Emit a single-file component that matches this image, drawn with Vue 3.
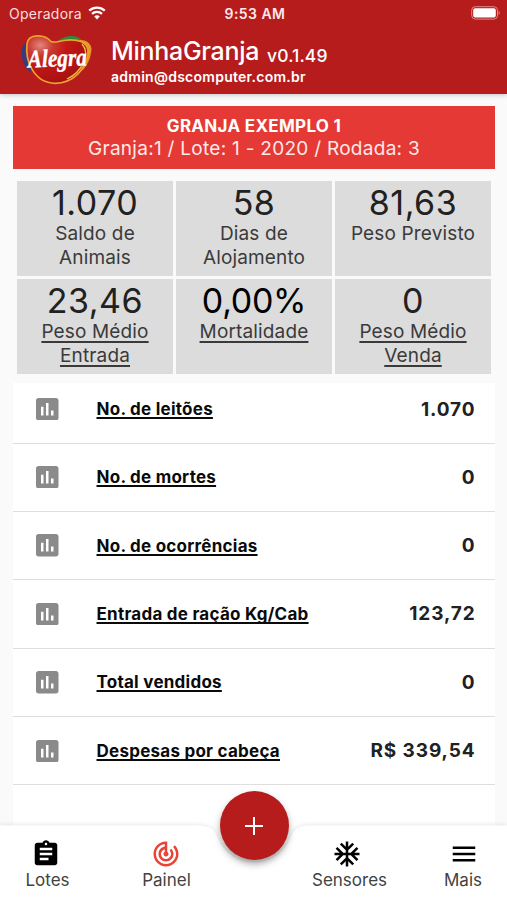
<script setup>
const stats = [
  { value: '1.070', label: ['Saldo de', 'Animais'] },
  { value: '58', label: ['Dias de', 'Alojamento'] },
  { value: '81,63', label: ['Peso Previsto'] },
  { value: '23,46', label: ['Peso Médio', 'Entrada'], link: true },
  { value: '0,00%', label: ['Mortalidade'], link: true, strong: true },
  { value: '0', label: ['Peso Médio', 'Venda'], link: true },
]

const rows = [
  { label: 'No. de leitões', value: '1.070' },
  { label: 'No. de mortes', value: '0' },
  { label: 'No. de ocorrências', value: '0' },
  { label: 'Entrada de ração Kg/Cab', value: '123,72' },
  { label: 'Total vendidos', value: '0' },
  { label: 'Despesas por cabeça', value: 'R$ 339,54' },
]
</script>

<template>
  <div class="screen">
    <header class="header">
      <div class="status">
        <div class="carrier">
          <span>Operadora</span>
          <svg class="wifi" viewBox="0 0 18 14" width="18" height="14">
            <path d="M1.2 4.7a11.2 11.2 0 0 1 15.6 0" />
            <path d="M4 7.8a7.2 7.2 0 0 1 10 0" />
            <path class="dot" d="M9 13.4 6.2 10.5a4 4 0 0 1 5.6 0z" />
          </svg>
        </div>
        <span class="time">9:53 AM</span>
        <svg class="battery" viewBox="0 0 30 14" width="30" height="14">
          <rect class="case" x=".7" y=".7" width="25.8" height="12.4" rx="3.6" />
          <rect class="charge" x="2.2" y="2.2" width="22.6" height="9.4" rx="2" />
          <path class="tip" d="M27.6 4.6q2.2 2.3 0 4.6z" />
        </svg>
      </div>
      <div class="brand">
        <svg class="logo" viewBox="0 0 74 52" width="74" height="52">
          <defs>
            <radialGradient id="heart" cx=".22" cy=".2" r=".85">
              <stop offset="0" stop-color="#e2877b" />
              <stop offset=".24" stop-color="#c93a30" />
              <stop offset=".5" stop-color="#c21814" />
              <stop offset="1" stop-color="#a51012" />
            </radialGradient>
          </defs>
          <path d="M6 8C-1 13 0 29 10 38L13 34 7 20z" fill="#373a7c" />
          <path d="M38 7C46 0 59 0 64 9L64 12 52 8z" fill="#2e8a38" />
          <path d="M60 6c9 0 13 6 11 13-1 7-4 12-8 17l-5-2z" fill="#e8952b" />
          <path class="heart" d="M31 7.500C25 0 8 -1 7 10 5 27 14 49 35 49.300 54 49 65 35 68 21 70 6 55 5 44 6.500 37 7.500 35 9 31 7.500z" />
          <path class="rim" d="M62 10C71 20 62 38 47 45" />
          <text class="wordmark" x="8" y="32.500" textLength="59" lengthAdjust="spacingAndGlyphs" transform="rotate(-2 37 30)">Alegra</text>
        </svg>
        <div class="names">
          <div class="title-line">
            <span class="title">MinhaGranja</span>
            <span class="version">v0.1.49</span>
          </div>
          <div class="mail">admin@dscomputer.com.br</div>
        </div>
      </div>
    </header>

    <main class="content">
      <section class="banner">
        <div class="farm">GRANJA EXEMPLO 1</div>
        <div class="batch">Granja:1 / Lote: 1 - 2020 / Rodada: 3</div>
      </section>

      <section class="stats">
        <div v-for="(s, i) in stats" :key="i" class="stat">
          <div class="stat-value" :class="{ strong: s.strong }">{{ s.value }}</div>
          <div v-for="line in s.label" :key="line" class="stat-label">
            <span :class="{ link: s.link }">{{ line }}</span>
          </div>
        </div>
      </section>

      <section class="list">
        <div v-for="r in rows" :key="r.label" class="row">
          <svg class="chart" viewBox="3 3 18 18" width="22.5" height="22.5">
            <path d="M19 3H5c-1.1 0-2 .9-2 2v14c0 1.1.9 2 2 2h14c1.1 0 2-.9 2-2V5c0-1.1-.9-2-2-2zM9 17H7v-7h2v7zm4 0h-2V7h2v10zm4 0h-2v-4h2v4z" />
          </svg>
          <span class="row-label"><span class="link">{{ r.label }}</span></span>
          <span class="row-value">{{ r.value }}</span>
        </div>
      </section>
    </main>

    <footer class="nav">
      <svg class="nav-shape" viewBox="0 0 507 85" width="507" height="85">
        <path d="M0 10H198C211 10 215 15 218 23A39 39 0 0 0 290 23C293 15 297 10 310 10H507V85H0z" transform="translate(0 -9.500)" />
        <path d="M0 60H507V85H0z" />
      </svg>
      <div class="item lotes">
        <svg viewBox="0 0 24 24" width="30" height="30">
          <path d="M19 3h-4.180C14.400 1.840 13.300 1 12 1c-1.300 0-2.400.84-2.820 2H5c-1.100 0-2 .9-2 2v14c0 1.100.9 2 2 2h14c1.100 0 2-.9 2-2V5c0-1.100-.9-2-2-2zm-7 0c.55 0 1 .45 1 1s-.45 1-1 1-1-.45-1-1 .45-1 1-1zm2 14H7v-2h7v2zm3-4H7v-2h10v2zm0-4H7V7h10v2z" />
        </svg>
        <span>Lotes</span>
      </div>
      <div class="item painel">
        <svg viewBox="0 0 24 24" width="30" height="30">
          <path d="M19.070 4.930l-1.410 1.410C19.100 7.790 20 9.790 20 12c0 4.420-3.580 8-8 8s-8-3.580-8-8c0-4.080 3.050-7.440 7-7.930v2.020C8.160 6.570 6 9.030 6 12c0 3.310 2.690 6 6 6s6-2.690 6-6c0-1.660-.67-3.160-1.760-4.240l-1.410 1.410C15.550 9.900 16 10.900 16 12c0 2.210-1.790 4-4 4s-4-1.790-4-4c0-1.860 1.280-3.410 3-3.860v2.140c-.6.35-1 .98-1 1.720 0 1.100.9 2 2 2s2-.9 2-2c0-.74-.4-1.380-1-1.720V2h-1C6.480 2 2 6.480 2 12s4.480 10 10 10 10-4.480 10-10c0-2.760-1.120-5.260-2.930-7.070z" />
        </svg>
        <span>Painel</span>
      </div>
      <div class="item sensores">
        <svg viewBox="0 0 24 24" width="30" height="30">
          <path d="M22 11h-4.170l3.240-3.240-1.410-1.420L15 11h-2V9l4.660-4.660-1.420-1.410L13 6.170V2h-2v4.170L7.760 2.930 6.340 4.340 11 9v2H9L4.340 6.340 2.930 7.760 6.170 11H2v2h4.170l-3.240 3.240 1.410 1.420L9 13h2v2l-4.660 4.660 1.420 1.410L11 17.830V22h2v-4.170l3.240 3.240 1.420-1.410L13 15v-2h2l4.660 4.660 1.410-1.420L17.830 13H22z" />
        </svg>
        <span>Sensores</span>
      </div>
      <div class="item mais">
        <svg viewBox="0 0 24 24" width="30" height="30">
          <path d="M3 18h18v-2H3v2zm0-5h18v-2H3v2zm0-7v2h18V6H3z" />
        </svg>
        <span>Mais</span>
      </div>
      <button class="fab" aria-label="Adicionar">
        <svg viewBox="0 0 18 18" width="18" height="18"><path d="M9 0v18M0 9h18" /></svg>
      </button>
    </footer>
  </div>
</template>

<style>
body {
  margin: 0;
  overflow: hidden;
}
</style>

<style scoped>
.screen {
  position: relative;
  display: flex;
  flex-direction: column;
  width: 507px;
  height: 900px;
  overflow: hidden;
  background: #fafafa;
  font-family: Inter, "Liberation Sans", sans-serif;
  color: #212121;
  white-space: nowrap;
}
.header {
  flex: none;
  height: 94px;
  background: #b71c1c;
  color: #fff;
  box-shadow: 0 1px 5px rgba(0, 0, 0, 0.22);
  z-index: 1;
}
.status {
  display: grid;
  grid-template-columns: 1fr auto 1fr;
  align-items: center;
  height: 27px;
  padding: 0 6px 0 9px;
  font-size: 14px;
}
.carrier {
  display: flex;
  align-items: center;
  gap: 6px;
  color: #f7dede;
  letter-spacing: 0.25px;
}
.wifi {
  fill: none;
  stroke: #fff;
  stroke-width: 2.3;
  margin-top: -2px;
}
.wifi .dot {
  fill: #fff;
  stroke: none;
}
.time {
  font-weight: 600;
  color: #fbe9e9;
  letter-spacing: 0.45px;
}
.battery {
  justify-self: end;
  margin-top: -1px;
}
.case {
  fill: none;
  stroke: #dc8a8a;
  stroke-width: 1;
}
.charge {
  fill: #fff;
}
.tip {
  fill: #dc8a8a;
}
.brand {
  display: flex;
  padding: 7px 0 0 20px;
}
.logo {
  overflow: visible;
}
.heart {
  fill: url(#heart);
  stroke: #eda22c;
  stroke-width: 1.7;
}
.rim {
  fill: none;
  stroke: #efc044;
  stroke-width: 1.3;
}
.wordmark {
  font: italic bold 25px "Liberation Serif", serif;
  fill: #fff;
  stroke: #fff;
  stroke-width: 0.4;
}
.names {
  padding: 1px 0 0 17px;
}
.title-line {
  display: flex;
  align-items: baseline;
  gap: 8px;
  height: 33px;
  line-height: 32px;
}
.title {
  font-size: 25px;
  font-weight: 500;
  letter-spacing: -0.3px;
}
.version {
  padding-top: 4px;
  align-self: flex-start;
  line-height: 34px;
  font-size: 17.500px;
  font-weight: 500;
  letter-spacing: 0.1px;
}
.mail {
  font-size: 14px;
  font-weight: 600;
  line-height: 18px;
  letter-spacing: 0.26px;
}
.content {
  flex: 1;
  padding: 12px 12px 0 13px;
}
.banner {
  height: 63px;
  padding-top: 9px;
  box-sizing: border-box;
  background: #e53935;
  color: #fff;
  text-align: center;
}
.farm {
  font-size: 17px;
  font-weight: 700;
  line-height: 22px;
  letter-spacing: 0.3px;
}
.batch {
  font-size: 19px;
  line-height: 23px;
  letter-spacing: 0.28px;
  color: #fde9e8;
}
.stats {
  display: grid;
  grid-template-columns: repeat(3, 156px);
  grid-auto-rows: 95px;
  gap: 3px;
  padding: 12px 4px 0;
}
.stat {
  background: #dcdcdc;
  text-align: center;
}
.stat-value {
  height: 41px;
  font-size: 34px;
  line-height: 44px;
  letter-spacing: 0.5px;
}
.stat-value.strong {
  color: #000;
  letter-spacing: -0.3px;
}
.stat-label {
  font-size: 19px;
  line-height: 23.500px;
  letter-spacing: 0.15px;
  color: #3a3a3a;
}
.link {
  text-decoration: underline;
  text-decoration-thickness: 1.500px;
  text-underline-offset: 2.500px;
  text-decoration-skip-ink: none;
}
.list {
  margin-top: 9px;
  background: #fff;
  height: 460px;
  padding-top: 1.500px;
  box-sizing: border-box;
}
.row {
  display: flex;
  align-items: center;
  height: 68.400px;
  padding: 0 19.500px 0 23px;
  box-sizing: border-box;
  border-bottom: 1px solid #dedede;
}
.row:first-child {
  height: 59px;
  padding-bottom: 9px;
}
.chart {
  fill: #8a8a8a;
}
.row-label {
  flex: 1;
  margin-left: 38px;
  font-size: 17px;
  font-weight: 700;
  line-height: 20px;
  letter-spacing: 0.25px;
  color: #0a0a0a;
}
.row-label .link {
  text-underline-offset: 2px;
}
.row-value {
  font-size: 19px;
  font-weight: 650;
  letter-spacing: 0.9px;
}
.nav {
  position: absolute;
  inset: auto 0 0 0;
  height: 75px;
}
.nav-shape {
  position: absolute;
  inset: 0;
  fill: #fff;
  overflow: visible;
  filter: drop-shadow(0 -1px 2px rgba(0, 0, 0, 0.09));
}
.item {
  position: absolute;
  top: 14px;
  display: flex;
  flex-direction: column;
  align-items: center;
  width: 90px;
  font-size: 17px;
  line-height: 20px;
  color: #424242;
}
.item svg {
  fill: #000;
  margin: 0 0 1px;
}
.lotes {
  left: 2.500px;
}
.lotes svg {
  margin-right: 4px;
}
.painel {
  left: 121.500px;
}
.painel svg {
  fill: #e84335;
  margin-right: 2px;
}
.sensores {
  left: 304.500px;
}
.sensores svg {
  margin-right: 5px;
}
.mais {
  left: 418px;
}
.mais svg {
  margin-left: 2px;
}
.fab {
  position: absolute;
  left: 219.500px;
  top: -34px;
  display: grid;
  place-items: center;
  width: 69px;
  height: 69px;
  padding: 0;
  border: 0;
  border-radius: 50%;
  background: #b71c1c;
  box-shadow: 0 4px 7px rgba(0, 0, 0, 0.34);
}
.fab path {
  stroke: #fff;
  stroke-width: 2;
}
</style>
